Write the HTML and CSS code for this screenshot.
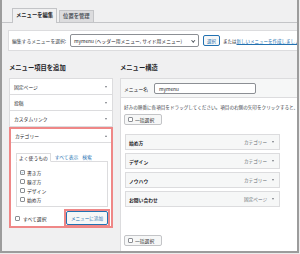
FILE: index.html
```html
<!DOCTYPE html>
<html lang="ja">
<head>
    <meta charset="UTF-8">
    <meta name="viewport" content="width=device-width, initial-scale=1.0">
    <title>メニュー</title>
    <link rel="stylesheet" href="styles.css">
</head>
<body>
<div class="frame">
    <div class="nav-tabs">
        <span class="tab active">メニューを編集</span>
        <span class="tab">位置を管理</span>
    </div>

    <div class="manage-menus">
        <span class="label">編集するメニューを選択:</span>
        <span class="select">mymenu (ヘッダー用メニュー, サイド用メニュー)<i class="chev"></i></span>
        <span class="btn small">選択</span>
        <span class="or">または<a class="link">新しいメニューを作成しましょう</a>。</span>
    </div>

    <div class="columns">
        <div class="col-left">
            <h2>メニュー項目を追加</h2>
            <div class="accordion">
                <div class="acc-item">固定ページ<i class="down"></i></div>
                <div class="acc-item">投稿<i class="down"></i></div>
                <div class="acc-item">カスタムリンク<i class="down"></i></div>
                <div class="acc-open">
                    <div class="acc-head">カテゴリー<i class="up"></i></div>
                    <div class="acc-body">
                        <div class="cat-tabs">
                            <span class="cat-tab active">よく使うもの</span>
                            <a class="cat-tab">すべて表示</a>
                            <a class="cat-tab">検索</a>
                        </div>
                        <ul class="cat-list">
                            <li><span class="check on"><svg viewBox="0 0 10 10"><path d="M2 5.2 L4.2 7.4 L8.2 2.6" fill="none" stroke="#2271b1" stroke-width="1.6"/></svg></span>書き方</li>
                            <li><span class="check"></span>稼ぎ方</li>
                            <li><span class="check"></span>デザイン</li>
                            <li><span class="check"></span>始め方</li>
                        </ul>
                        <div class="cat-foot">
                            <label class="select-all"><span class="check"></span>すべて選択</label>
                            <div class="mark"><span class="btn add">メニューに追加</span></div>
                        </div>
                    </div>
                </div>
            </div>
        </div>

        <div class="col-right">
            <h2>メニュー構造</h2>
            <div class="menu-box">
                <div class="menu-head">
                    <span class="label">メニュー名</span>
                    <span class="input">mymenu</span>
                </div>
                <div class="menu-body">
                    <p class="hint">好みの順番に各項目をドラッグしてください。項目の右側の矢印をクリックすると、追加の設定オプションが表示されます。</p>
                    <label class="bulk"><span class="check"></span>一括選択</label>
                    <ul class="menu-items">
                        <li><b>始め方</b><span class="type">カテゴリー<i class="down"></i></span></li>
                        <li><b>デザイン</b><span class="type">カテゴリー<i class="down"></i></span></li>
                        <li><b>ノウハウ</b><span class="type">カテゴリー<i class="down"></i></span></li>
                        <li><b>お問い合わせ</b><span class="type">固定ページ<i class="down"></i></span></li>
                    </ul>
                    <label class="bulk bottom"><span class="check"></span>一括選択</label>
                </div>
            </div>
        </div>
    </div>
</div>
</body>
</html>
```

FILE: styles.css
```css
* {
    box-sizing: border-box;
}

body {
    margin: 0;
    background-color: #ececec;
    font-family: "Noto Sans CJK JP", "Noto Sans", sans-serif;
    color: #1d2327;
}

.frame {
    width: 299px;
    height: 253px;
    border: 2px solid #9c9c9c;
    border-top: none;
    background-color: #f0f0f1;
    overflow: hidden;
}

/* tabs */
.nav-tabs {
    display: flex;
    align-items: flex-end;
    gap: 2px;
    height: 23px;
    padding: 8px 0 0 10px;
    border-bottom: 1px solid #c3c4c7;
}

.tab {
    height: 12px;
    padding: 0 3px;
    font-size: 5.3px;
    font-weight: 600;
    line-height: 11px;
    color: #50575e;
    background-color: #dcdcde;
    border: 1px solid #c3c4c7;
    border-bottom: none;
}

.tab.active {
    height: 15px;
    margin-bottom: -1px;
    line-height: 13px;
    color: #1d2327;
    background-color: #f0f0f1;
}

/* select menu bar */
.manage-menus {
    display: flex;
    align-items: center;
    width: 420px;
    height: 21px;
    margin: 7px 0 0 6px;
    padding-left: 3px;
    background-color: #fff;
    border: 1px solid #dcdcde;
    font-size: 4.8px;
    white-space: nowrap;
}

.manage-menus .label {
    width: 58px;
    color: #3c434a;
}

.select {
    display: flex;
    align-items: center;
    width: 129px;
    height: 13px;
    padding: 0 4px 0 3px;
    border: 1px solid #8c8f94;
    border-radius: 2px;
}

.chev {
    width: 2.5px;
    height: 2.5px;
    margin-left: auto;
    margin-top: -1px;
    border-right: 0.8px solid #50575e;
    border-bottom: 0.8px solid #50575e;
    transform: rotate(45deg);
}

.btn {
    display: flex;
    align-items: center;
    justify-content: center;
    color: #2271b1;
    background-color: #f6f7f7;
    border: 1px solid #2271b1;
    border-radius: 2px;
}

.btn.small {
    width: 17px;
    height: 11px;
    margin-left: 4px;
    font-size: 4.5px;
}

.or {
    margin-left: 3px;
    font-size: 4.5px;
}

.link {
    color: #2271b1;
    text-decoration: underline;
}

/* columns */
.columns {
    display: flex;
    gap: 7px;
    margin: 13px 0 0 7px;
}

h2 {
    margin: 0 0 6px;
    font-size: 6.3px;
    font-weight: 700;
    line-height: 8px;
}

.col-left {
    flex: none;
    width: 104px;
}

.col-right {
    flex: none;
    width: 300px;
}

.accordion {
    border-top: 1px solid #dcdcde;
}

.acc-item {
    display: flex;
    align-items: center;
    justify-content: space-between;
    height: 16px;
    padding: 0 5px 0 4px;
    font-size: 4.8px;
    background-color: #fff;
    border: 1px solid #dcdcde;
    border-top: none;
}

.down, .up {
    display: inline-block;
    width: 0;
    height: 0;
    border-left: 1.5px solid transparent;
    border-right: 1.5px solid transparent;
}

.down {
    border-top: 2px solid #787c82;
}

.up {
    border-bottom: 2px solid #787c82;
}

.acc-open {
    height: 101px;
    background-color: #fff;
    border: 2px solid #ef8787;
}

.acc-head {
    display: flex;
    align-items: center;
    justify-content: space-between;
    height: 14px;
    padding: 0 4px 0 4px;
    font-size: 4.8px;
    border-bottom: 1px solid #dcdcde;
}

.acc-body {
    padding: 9px 3px 0 5px;
}

.cat-tabs {
    display: flex;
    align-items: center;
    gap: 4px;
    height: 9px;
    font-size: 4.8px;
}

.cat-tab {
    line-height: 8px;
    color: #2271b1;
}

.cat-tab.active {
    height: 9px;
    margin-bottom: -1px;
    padding: 0 2px;
    color: #1d2327;
    background-color: #fff;
    border: 1px solid #dcdcde;
    border-bottom: 1px solid #fff;
    position: relative;
}

.cat-list {
    height: 46px;
    margin: 0;
    padding: 6px 0 0 3px;
    list-style: none;
    border: 1px solid #dcdcde;
}

.cat-list li {
    display: flex;
    align-items: center;
    gap: 2px;
    height: 9px;
    font-size: 4.8px;
}

.check {
    display: inline-block;
    flex: none;
    width: 5px;
    height: 5px;
    background-color: #fff;
    border: 0.8px solid #8c8f94;
    border-radius: 1px;
}

.check svg {
    display: block;
    width: 100%;
    height: 100%;
}

.cat-foot {
    display: flex;
    justify-content: space-between;
    align-items: flex-end;
    height: 20px;
    margin: 0 -2px 0 -1px;
}

.select-all {
    display: flex;
    align-items: center;
    gap: 3px;
    align-self: center;
    padding-top: 3px;
    font-size: 4.8px;
}

.mark {
    width: 46px;
    height: 18px;
    border: 2px solid #ef8787;
}

.btn.add {
    height: 14px;
    font-size: 4.6px;
}

/* menu structure */
.menu-box {
    height: 190px;
    background-color: #fff;
    border: 1px solid #dcdcde;
}

.menu-head {
    display: flex;
    align-items: center;
    height: 19px;
    padding-left: 3px;
    background-color: #f6f7f7;
    border-bottom: 1px solid #dcdcde;
    font-size: 4.8px;
}

.menu-head .label {
    width: 30px;
}

.input {
    display: flex;
    align-items: center;
    width: 102px;
    height: 11px;
    padding-left: 4px;
    background-color: #fff;
    border: 1px solid #8c8f94;
    border-radius: 2px;
}

.menu-body {
    padding: 6px 0 0 3px;
}

.hint {
    margin: 0;
    font-size: 4.6px;
    line-height: 6px;
    color: #3c434a;
    white-space: nowrap;
}

.bulk {
    display: flex;
    align-items: center;
    gap: 2px;
    width: 38px;
    height: 11px;
    margin-top: 4px;
    padding-left: 3px;
    font-size: 4.8px;
    border: 1px solid #c3c4c7;
    border-radius: 2px;
    background-color: #f6f7f7;
}

.bulk.bottom {
    margin-top: 28px;
}

.menu-items {
    display: flex;
    flex-direction: column;
    gap: 3px;
    width: 155px;
    margin: 9px 0 0 1px;
    padding: 0;
    list-style: none;
}

.menu-items li {
    display: flex;
    align-items: center;
    justify-content: space-between;
    height: 16px;
    padding: 0 5px 0 3px;
    background-color: #f6f7f7;
    border: 1px solid #dcdcde;
    font-size: 4.8px;
}

.menu-items b {
    font-weight: 600;
}

.type {
    display: flex;
    align-items: center;
    gap: 5px;
    font-size: 4.6px;
    color: #646970;
}
```
